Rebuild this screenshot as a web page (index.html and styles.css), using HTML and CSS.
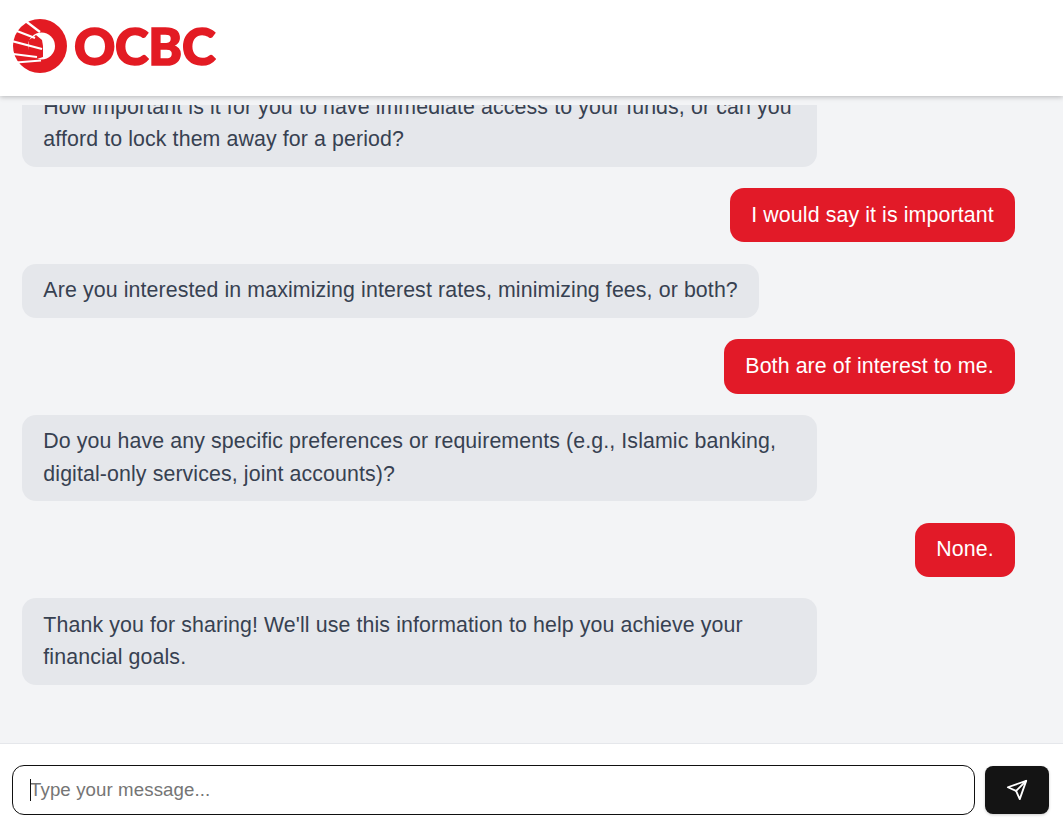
FILE: index.html
```html
<!DOCTYPE html>
<html lang="en">

<head>
    <meta charset="UTF-8">
    <meta name="viewport" content="width=device-width, initial-scale=1.0">
    <title>OCBC Chat</title>
    <link rel="stylesheet" href="styles.css">
</head>

<body>
    <div class="page">
        <header class="top-bar">
            <div class="logo">
                <svg class="logo-mark" viewBox="0 0 54 54" width="54" height="54">
                    <circle cx="27" cy="27" r="27" fill="#e31b23" />
                    <circle cx="28.500" cy="27" r="13.500" fill="#fff" />
                    <path fill="#e31b23" d="M15 32 L16 21 L23 16 L29 21 L30 27 L30 38 L24 40 L15 38Z" />
                    <g fill="none" stroke="#fff" stroke-width="2.200">
                        <path d="M12.500 2 L27 13" />
                        <path d="M2.500 11.500 L22 19" />
                        <path d="M-1 22 L29 30" />
                        <path d="M0 35 L24 38" />
                        <path d="M3 43.500 L28 41.500" />
                    </g>
                </svg>
                <span class="logo-text">OCBC</span>
            </div>
        </header>

        <main class="messages">
            <div class="bubble bot">How important is it for you to have immediate access to your funds, or can you afford to lock them away for a period?</div>
            <div class="bubble user">I would say it is important</div>
            <div class="bubble bot">Are you interested in maximizing interest rates, minimizing fees, or both?</div>
            <div class="bubble user">Both are of interest to me.</div>
            <div class="bubble bot">Do you have any specific preferences or requirements (e.g., Islamic banking, digital-only services, joint accounts)?</div>
            <div class="bubble user">None.</div>
            <div class="bubble bot">Thank you for sharing! We'll use this information to help you achieve your financial goals.</div>
        </main>

        <footer class="composer">
            <div class="input-wrap">
                <input class="message-input" type="text" placeholder="Type your message...">
                <span class="caret"></span>
            </div>
            <button class="send-btn" type="button" aria-label="Send">
                <svg viewBox="0 0 24 24" width="22" height="22" fill="none" stroke="#fff" stroke-width="2" stroke-linecap="round" stroke-linejoin="round">
                    <path d="m22 2-7 20-4-9-9-4Z" />
                    <path d="M22 2 11 13" />
                </svg>
            </button>
        </footer>
    </div>
</body>

</html>
```

FILE: styles.css
```css
* {
    box-sizing: border-box;
}

html,
body {
    height: 100%;
    margin: 0;
}

body {
    font-family: "Liberation Sans", Arial, sans-serif;
    background-color: #f3f4f6;
    color: #374151;
}

.page {
    height: 100%;
    display: flex;
    flex-direction: column;
    overflow: hidden;
}

.top-bar {
    flex: none;
    height: 96px;
    padding-left: 13px;
    display: flex;
    align-items: center;
    background-color: #fff;
    box-shadow: 0 1px 5px rgba(0, 0, 0, 0.25);
    position: relative;
    z-index: 1;
}

.logo {
    display: flex;
    align-items: center;
    gap: 7px;
    margin-top: -4px;
}

.logo-mark {
    display: block;
}

.logo-text {
    font-family: Lato, sans-serif;
    font-weight: 900;
    font-size: 51px;
    line-height: 54px;
    letter-spacing: -0.3px;
    color: #e31b23;
    -webkit-text-stroke: 1.6px #e31b23;
}

.messages {
    flex: 1;
    min-height: 0;
    margin-top: 9px;
    overflow: hidden;
    display: flex;
    flex-direction: column;
    justify-content: flex-end;
    gap: 21.27px;
    padding: 0 48px 58px 22px;
}

.bubble {
    flex: none;
    padding: 10.5px 21.33px 11.5px;
    border-radius: 14px;
    font-size: 21.33px;
    line-height: 32.33px;
    letter-spacing: 0.11px;
}

.bot {
    align-self: flex-start;
    max-width: 795px;
    background-color: #e5e7eb;
}

.user {
    align-self: flex-end;
    background-color: #e21a28;
    color: #fff;
}

.composer {
    flex: none;
    height: 84px;
    padding: 8px 14px 0 12px;
    display: flex;
    align-items: center;
    gap: 10px;
    background-color: #fff;
    border-top: 1px solid #e5e7eb;
}

.input-wrap {
    flex: 1;
    position: relative;
}

.message-input {
    display: block;
    width: 100%;
    height: 50px;
    padding: 0 17px;
    border: 1.5px solid #111;
    border-radius: 12px;
    outline: none;
    font-family: inherit;
    font-size: 18.67px;
    letter-spacing: 0.1px;
    color: #111;
    background-color: #fff;
}

.message-input::placeholder {
    color: #757575;
    opacity: 1;
}

.caret {
    position: absolute;
    left: 18px;
    top: 14px;
    width: 1px;
    height: 22px;
    background-color: #111;
}

.send-btn {
    flex: none;
    width: 64px;
    height: 48px;
    display: flex;
    align-items: center;
    justify-content: center;
    border: none;
    border-radius: 8px;
    background-color: #141414;
    box-shadow: 0 1px 3px rgba(0, 0, 0, 0.2);
    cursor: pointer;
}
```
